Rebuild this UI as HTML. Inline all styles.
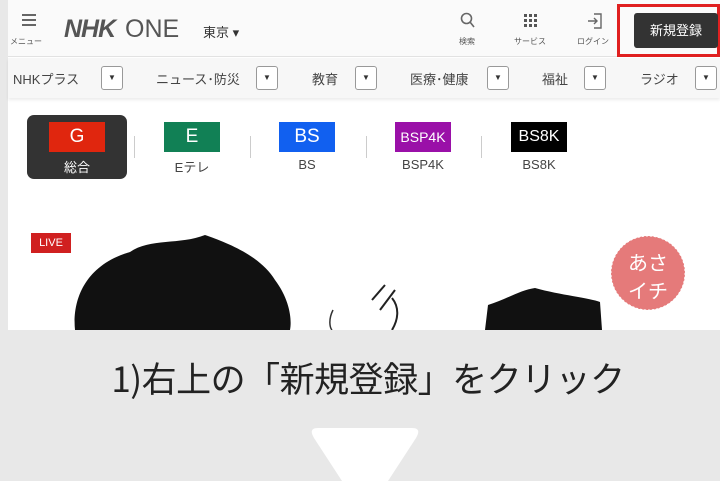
<!DOCTYPE html>
<html><head><meta charset="utf-8"><style>
*{margin:0;padding:0;box-sizing:border-box}
body{width:720px;height:481px;overflow:hidden;background:#e8e8e8;font-family:"Liberation Sans","Noto Sans CJK JP",sans-serif;position:relative}
.a{position:absolute}
.panel{left:8px;top:0;width:712px;height:330px;background:#fff}
.hdr{left:8px;top:0;width:712px;height:57px;background:#fafafa;border-bottom:1px solid #e2e2e2}
.nav{left:8px;top:58px;width:712px;height:40px;background:#f7f7f7;box-shadow:0 2px 3px rgba(0,0,0,.08)}
.nt{font-size:13px;color:#444;top:69px}
.dd{width:22px;height:24px;border:1px solid #999;border-radius:3px;background:#fff;top:66px;font-size:8px;color:#333;text-align:center;line-height:22px}
.ch{top:122px;width:56px;height:30px;color:#fff;text-align:center;font-size:19px;line-height:30px}
.cl{top:157px;font-size:13px;color:#444;width:80px;text-align:center}
.sep{top:136px;width:1px;height:22px;background:#ccc}
.small{font-size:8px;color:#555}
</style></head><body>
<div class="a panel"></div>
<div class="a hdr"></div>
<div class="a" style="left:22px;top:14px;width:14px;height:12px;border-top:2px solid #666;border-bottom:2px solid #666"><div style="margin-top:3px;height:2px;background:#666"></div></div>
<div class="a small" style="left:10px;top:36px">メニュー</div>
<div class="a" style="left:64px;top:15px;font-size:25px;font-weight:bold;font-style:italic;color:#555;letter-spacing:-1px">NHK</div>
<div class="a" style="left:125px;top:15px;font-size:25px;color:#555">ONE</div>
<div class="a" style="left:203px;top:22px;font-size:13px;color:#333">東京 ▾</div>
<svg class="a" style="left:460px;top:12px" width="16" height="18"><circle cx="6.5" cy="6.5" r="5" fill="none" stroke="#666" stroke-width="1.6"/><path d="M10 10 L14 15" stroke="#666" stroke-width="1.6"/></svg>
<div class="a small" style="left:459px;top:36px">検索</div>
<svg class="a" style="left:524px;top:14px" width="14" height="14" fill="#555"><rect x="0" y="0" width="3" height="3"/><rect x="5" y="0" width="3" height="3"/><rect x="10" y="0" width="3" height="3"/><rect x="0" y="5" width="3" height="3"/><rect x="5" y="5" width="3" height="3"/><rect x="10" y="5" width="3" height="3"/><rect x="0" y="10" width="3" height="3"/><rect x="5" y="10" width="3" height="3"/><rect x="10" y="10" width="3" height="3"/></svg>
<div class="a small" style="left:514px;top:36px">サービス</div>
<svg class="a" style="left:587px;top:13px" width="16" height="16" fill="none" stroke="#666" stroke-width="1.4"><path d="M7 1 H14 V15 H7"/><path d="M1 8 H10 M7 5 L10 8 L7 11"/></svg>
<div class="a small" style="left:577px;top:36px">ログイン</div>
<div class="a" style="left:617px;top:4px;width:103px;height:53px;border:3px solid #e02020"></div>
<div class="a" style="left:634px;top:13px;width:84px;height:35px;background:#333;border-radius:3px;color:#fff;font-size:13px;text-align:center;line-height:35px">新規登録</div>
<div class="a nav"></div>
<div class="a nt" style="left:13px">NHKプラス</div><div class="a dd" style="left:101px">▼</div>
<div class="a nt" style="left:156px">ニュース･防災</div><div class="a dd" style="left:256px">▼</div>
<div class="a nt" style="left:312px">教育</div><div class="a dd" style="left:355px">▼</div>
<div class="a nt" style="left:410px">医療･健康</div><div class="a dd" style="left:487px">▼</div>
<div class="a nt" style="left:542px">福祉</div><div class="a dd" style="left:584px">▼</div>
<div class="a nt" style="left:640px">ラジオ</div><div class="a dd" style="left:695px">▼</div>
<div class="a" style="left:27px;top:115px;width:100px;height:64px;background:#333;border-radius:7px"></div>
<div class="a ch" style="left:49px;background:#e0260e">G</div>
<div class="a cl" style="left:37px;color:#fff">総合</div>
<div class="a sep" style="left:134px"></div>
<div class="a ch" style="left:164px;background:#118055">E</div>
<div class="a cl" style="left:152px">Eテレ</div>
<div class="a sep" style="left:250px"></div>
<div class="a ch" style="left:279px;background:#1160f0">BS</div>
<div class="a cl" style="left:267px">BS</div>
<div class="a sep" style="left:366px"></div>
<div class="a ch" style="left:395px;background:#9a10a8;font-size:14px">BSP4K</div>
<div class="a cl" style="left:383px">BSP4K</div>
<div class="a sep" style="left:481px"></div>
<div class="a ch" style="left:511px;background:#000;font-size:16px">BS8K</div>
<div class="a cl" style="left:499px">BS8K</div>
<div class="a" style="left:31px;top:233px;width:40px;height:20px;background:#d02020;color:#fff;font-size:11px;text-align:center;line-height:20px">LIVE</div>
<svg class="a" style="left:0;top:230px" width="720" height="100">
<path d="M75 100 C72 70 85 35 130 22 C150 8 180 15 205 5 C225 12 260 25 275 50 C290 70 292 90 290 100 Z" fill="#111"/>
<path d="M485 100 L488 75 C505 70 520 60 535 58 C560 65 590 68 600 72 L602 100 Z" fill="#111"/>
<path d="M372 70 L385 55 M380 80 L395 60 M392 68 C400 78 398 90 392 100" stroke="#222" stroke-width="2" fill="none"/>
<path d="M333 80 C328 90 330 98 332 100" stroke="#333" stroke-width="1.5" fill="none"/>
<circle cx="648" cy="43" r="37" fill="#e57a7a" stroke="#fff" stroke-dasharray="2 2"/>
<text x="648" y="40" font-size="20" fill="#fff" text-anchor="middle" font-family="Noto Sans CJK JP">あさ</text>
<text x="648" y="68" font-size="20" fill="#fff" text-anchor="middle" font-family="Noto Sans CJK JP">イチ</text>
</svg>
<div class="a" style="left:0;top:330px;width:720px;height:151px;background:#e8e8e8"></div>
<div class="a" style="left:0;top:352px;width:720px;text-align:center;font-size:35px;color:#222;padding-left:16px;letter-spacing:-0.5px;font-family:'Noto Sans CJK JP',sans-serif">1)右上の「新規登録」をクリック</div>
<svg class="a" style="left:308px;top:428px" width="114" height="53"><path d="M10 0 H104 Q114 0 108 10 L80 53 H34 L6 10 Q0 0 10 0Z" fill="#fff"/></svg>
</body></html>
